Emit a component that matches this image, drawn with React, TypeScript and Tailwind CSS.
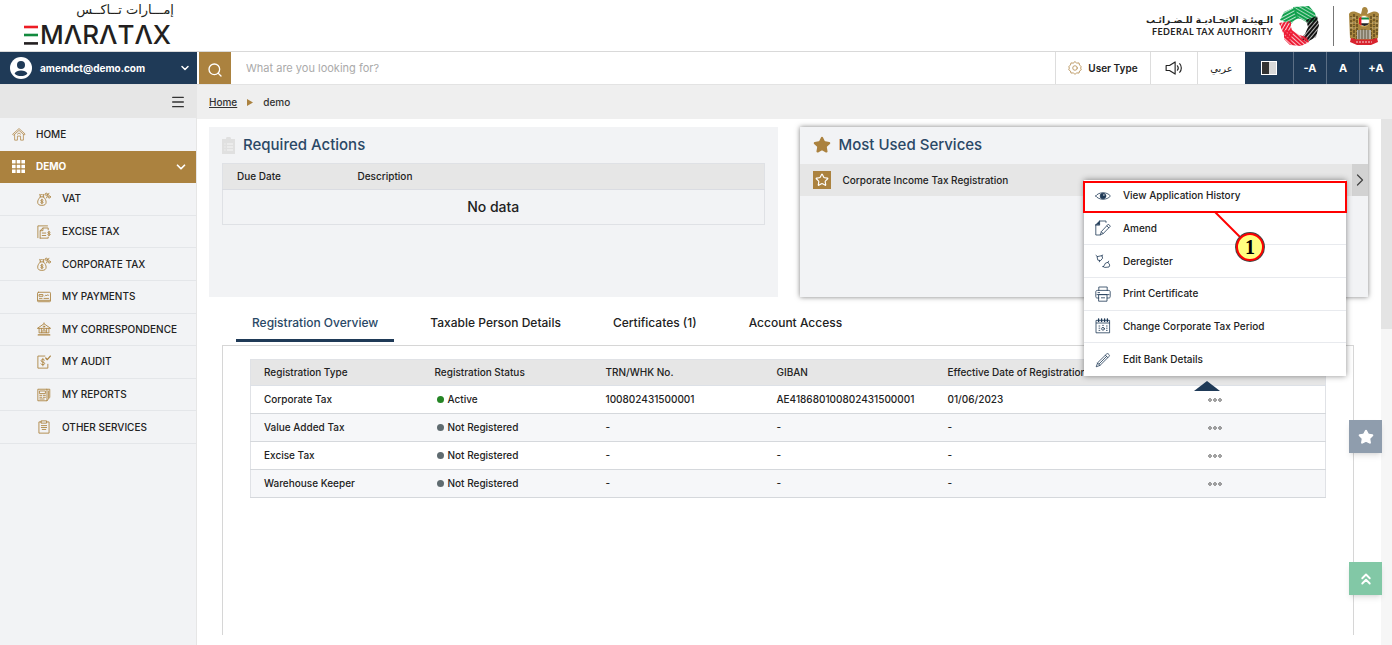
import type { ReactNode } from 'react'
import { ChevronDown, ChevronRight, ChevronsUp, Menu, Search, Star } from 'lucide-react'

type IconProps = { className?: string; strokeWidth?: number; children: ReactNode }

function LineIcon({ className = 'size-4', strokeWidth = 1, children }: IconProps) {
  return (
    <svg
      viewBox="0 0 16 16"
      className={`shrink-0 ${className}`}
      fill="none"
      stroke="currentColor"
      strokeWidth={strokeWidth}
      strokeLinecap="round"
      strokeLinejoin="round"
      aria-hidden="true"
    >
      {children}
    </svg>
  )
}

const homeIcon = (
  <>
    <path d="M1 8 8 1.8 15 8l-1 1.1L8 3.9 2 9.1Z" />
    <path d="M3 8.6V15h3.2v-4.6h3.6V15H13V8.6" />
    <path d="M6.2 8.2 8 6.8l1.8 1.4" />
  </>
)

const bagIcon = (
  <>
    <path d="M3.4 5.6h4.4M4 5.2 3 2.8l1.6.8 1-1 1 1L8 2.8l-.8 2.4" />
    <path d="M3.8 5.8C1.6 7.8.8 9.8.8 11.6c0 2.4 1.4 3.7 4.8 3.7s4.8-1.3 4.8-3.7c0-1.8-.8-3.8-3-5.8" />
    <path d="M7 9.2c-.6-.6-2.6-.6-2.6.6 0 1.4 2.6.6 2.6 2 0 1.2-2.2 1.2-2.8.4M5.6 8.2v5.2" />
    <circle cx="10.6" cy="2.6" r="1.3" />
    <circle cx="14" cy="5.6" r="1.3" />
    <path d="m13.6 1.4-2.8 5.4" />
  </>
)

const exciseIcon = (
  <>
    <path d="M1 14.5V1h11" />
    <path d="M3.6 15V6.4L6.8 3.4h6v2M3.6 15h9.2v-1.2M3.8 6.5h3V3.6" />
    <path d="M6 9.2h4M6 12h4" />
    <path d="M15 8.2c-.6-.7-2.6-.6-2.6.6 0 1.4 2.7.6 2.7 2 0 1.2-2.3 1.2-2.9.4M13.7 7.2v5" />
  </>
)

const paymentIcon = (
  <>
    <rect x=".6" y="2.6" width="14.8" height="10.8" rx="1" />
    <path d="M2.8 5.2h4v2h-4zM9.2 6.8c1-1.6 1.4-1.6 1.6 0 .8-1.4 1.2-1.4 2.4-.8" />
    <path d="M2.8 9.6h3M8 9.6h5.2M1 11.8h14" />
  </>
)

const bankIcon = (
  <>
    <path d="M.8 7 8 2l7.2 5ZM8 1v1" />
    <path d="M2.4 7.4v4.8M5 7.4v4.8M11 7.4v4.8M13.6 7.4v4.8M6.8 12V9h2.4v3M3 12.4h10" />
    <path d="M1.4 14.8h13.2" strokeWidth="1.4" />
    <circle cx="8" cy="5.2" r=".8" />
  </>
)

const auditIcon = (
  <>
    <path d="M9 1.2H1V15h11.4v-4.4" />
    <path d="m10 3.4 1.8 2L15.2 1.2" strokeWidth="1.4" />
    <path d="M8.6 5.8C7.6 4.6 4.6 4.8 4.6 6.6c0 2 4.2 1 4.2 3 0 1.8-3.4 2-4.4.6M6.7 3.8v8.6" />
  </>
)

const reportIcon = (
  <>
    <path d="M1.4 1.4h10v13.2h-10zM11.4 1.4h3.2v9.2l-3.2 4" />
    <path d="M3.2 3.4h6.4v3H3.2zM3.2 8.4h2.2M7.2 8.4h2.4M3.2 10.6h2.2M7.2 10.6h2.4M3.2 12.6h5" />
    <path d="M13 3.4v8" />
  </>
)

const clipboardIcon = (
  <>
    <path d="M5 2.2H2.2V15h11.6V2.2H11" />
    <path d="M5 1h6v2.6H5zM5 6.4h6M5 8.6h6M6 10.8h4" />
  </>
)

const navItems = [
  { label: 'VAT', icon: bagIcon },
  { label: 'EXCISE TAX', icon: exciseIcon },
  { label: 'CORPORATE TAX', icon: bagIcon },
  { label: 'MY PAYMENTS', icon: paymentIcon },
  { label: 'MY CORRESPONDENCE', icon: bankIcon },
  { label: 'MY AUDIT', icon: auditIcon },
  { label: 'MY REPORTS', icon: reportIcon },
  { label: 'OTHER SERVICES', icon: clipboardIcon },
]

const menuItems = [
  {
    label: 'View Application History',
    icon: (
      <>
        <path d="M.6 8C4 3.6 12 3.6 15.4 8 12 12.4 4 12.4.6 8Z" />
        <circle cx="8" cy="8" r="2.8" fill="currentColor" />
        <circle cx="8.9" cy="7" r=".7" fill="#fff" stroke="none" />
      </>
    ),
  },
  {
    label: 'Amend',
    icon: (
      <>
        <path d="M4.4 1H11v1.4M.8 4.6V15h4.4" />
        <path d="M.8 4.8 4.6 1v3.8Z" fill="currentColor" />
        <path d="m6.4 11.8-1.2 3 3-1.2 7.2-7.4-1.8-1.8ZM12 6l1.8 1.8M6.4 11.8l1.8 1.8" />
      </>
    ),
  },
  {
    label: 'Deregister',
    icon: (
      <>
        <path d="m1 2.4 1.4 1.2M2.4 3.6 7 2.6l.6 2.6-2 2.4-2.4-.4ZM6.8 2.8l1-.8M4.8 7.4l-.4 1.4" />
        <path d="m8.6 13.4 2-3.4 2.4-.6 1.8 2.6-.8 2-3.8.4ZM13 9.4l.6-1.2M7.6 13.6h1" />
      </>
    ),
  },
  {
    label: 'Print Certificate',
    icon: (
      <>
        <path d="M3.8 4.4V1h8.4v3.4M3.8 12H2.2C1.2 12 .8 11.4.8 10.6V6c0-1 .5-1.6 1.4-1.6h11.6c.9 0 1.4.6 1.4 1.6v4.6c0 .8-.4 1.4-1.4 1.4h-1.6" />
        <path d="M4 8.6h8v6.6H4zM6.4 11.8h3.2M3 6.6h1.6M2 8.6h12" />
      </>
    ),
  },
  {
    label: 'Change Corporate Tax Period',
    icon: (
      <>
        <path d="M1.4 2.4h13.2v12.4H1.4zM1.4 5h13.2" />
        <path d="M3.6 1v2.4M6.6 1v2.4M9.6 1v2.4M12.4 1v2.4" strokeWidth="1.4" />
        <path d="M4 8h.8M4 10.2h.8M4 12.4h.8M11.4 8h.8M11.4 10.2h.8M11.4 12.4h.8M7.6 7.4h.8" />
        <circle cx="8" cy="10.8" r="1.4" />
      </>
    ),
  },
  {
    label: 'Edit Bank Details',
    icon: (
      <path d="m2.6 11-1.4 3.8L5 13.4l9-9c.6-.6.6-1.2 0-1.8l-.6-.6c-.6-.6-1.2-.6-1.8 0ZM10.4 3.2 12.8 5.6M2.6 11 5 13.4M11.6 4.4 4 12" />
    ),
  },
]

const registrations = [
  {
    type: 'Corporate Tax',
    status: 'Active',
    trn: '100802431500001',
    giban: 'AE418680100802431500001',
    date: '01/06/2023',
  },
  { type: 'Value Added Tax', status: 'Not Registered', trn: '-', giban: '-', date: '-' },
  { type: 'Excise Tax', status: 'Not Registered', trn: '-', giban: '-', date: '-' },
  { type: 'Warehouse Keeper', status: 'Not Registered', trn: '-', giban: '-', date: '-' },
]

const tabs = ['Registration Overview', 'Taxable Person Details', 'Certificates (1)', 'Account Access']

function EmaraTaxLogo() {
  return (
    <a href="#" aria-label="EmaraTax" className="flex w-[150px] flex-col text-[#231f20]">
      <span dir="rtl" className="font-['DejaVu_Sans',sans-serif] text-[13px] leading-[18px]">
        إمـــارات تــاكــس
      </span>
      <span className="flex items-center gap-0.5">
        <svg viewBox="0 0 14 20" className="h-5 w-3.5 shrink-0" aria-hidden="true">
          <path d="M0 2h14" stroke="#ed1c24" strokeWidth="2.6" />
          <path d="M0 10h14" stroke="#128a3e" strokeWidth="2.6" />
          <path d="M0 18.4h14" stroke="#231f20" strokeWidth="2.6" />
        </svg>
        <span className="text-[26px] leading-8 font-medium">MΛRΛTΛX</span>
      </span>
    </a>
  )
}

function AuthorityMark() {
  return (
    <svg viewBox="0 0 40 40" className="size-10 shrink-0" aria-hidden="true">
      <defs>
        <pattern id="weaveGreen" width="3" height="3" patternUnits="userSpaceOnUse" patternTransform="rotate(-28)">
          <rect width="3" height="2.3" fill="#11a04d" />
        </pattern>
        <pattern id="weaveGreenSteep" width="3" height="3" patternUnits="userSpaceOnUse" patternTransform="rotate(30)">
          <rect width="3" height="2.4" fill="#11a04d" />
        </pattern>
        <pattern id="weaveBlack" width="3" height="3" patternUnits="userSpaceOnUse" patternTransform="rotate(-50)">
          <rect width="3" height="2.3" fill="#111" />
        </pattern>
        <pattern id="weaveRed" width="3" height="3" patternUnits="userSpaceOnUse" patternTransform="rotate(42)">
          <rect width="3" height="2.3" fill="#ee1c35" />
        </pattern>
        <pattern id="weaveRedSteep" width="3" height="3" patternUnits="userSpaceOnUse" patternTransform="rotate(-60)">
          <rect width="3" height="2.2" fill="#ee1c35" />
        </pattern>
      </defs>
      <path d="M1 14 5 6 16 1l4 11-4 2-4 4Z" fill="url(#weaveGreen)" />
      <path d="m14 1 16-1 6 7 2 8-9 2-7-4-5-1Z" fill="url(#weaveGreenSteep)" />
      <path d="m38 10 2 9-3 12-9 5-7-3 5-5 3-7-2-7Z" fill="url(#weaveBlack)" />
      <path d="m0 17 12-2v6l2 6-2 8-7-6Z" fill="url(#weaveRedSteep)" />
      <path d="m5 24 8 0 7 5 8 2 2 5-8 4-11-1-6-6Z" fill="url(#weaveRed)" />
    </svg>
  )
}

function Emblem() {
  return (
    <svg viewBox="0 0 32 40" className="h-10 w-8 shrink-0" aria-hidden="true">
      <path
        d="M14 4c0-3 3-4 5-2l1 3-1 3 5-2c4-1 6 0 7 2l-1 24-7 4-7 2-7-2-7-4L1 8c1-2 3-3 7-2l5 2Z"
        fill="#a8863f"
      />
      <path
        d="M3 10v20M6 8v25M9 10v24M23 10v24M26 8v25M29 10v20"
        stroke="#4f3d17"
        strokeWidth="1.2"
        strokeDasharray="3 1"
      />
      <path d="M2 12h6M2 17h6M2 22h6M24 12h6M24 17h6M24 22h6" stroke="#dcc48a" strokeWidth=".8" />
      <circle cx="16" cy="15" r="5.5" fill="#fff" stroke="#cfa347" strokeWidth="1" />
      <path d="M11.8 11.5h8.6a5 5 0 0 1 .8 2H12Z" fill="#108a43" />
      <path d="M12 17.2h9a5 5 0 0 1-9 0Z" fill="#222" />
      <path d="M11 12v6l2.4 1.8V10.4Z" fill="#e31b23" />
      <path d="M9 24h14v9H9z" fill="#b5b0a4" />
      <path d="M11 24v9M14 23v10M17 23v10M20 24v9" stroke="#5d5339" strokeWidth="1" />
      <path d="m3 32 6 1.6h14l6-1.6 1 4-7 3H9l-7-3Z" fill="#d8232e" />
      <path d="M8 36h16" stroke="#fff" strokeWidth=".8" strokeDasharray="2 1" />
    </svg>
  )
}

function Header() {
  return (
    <header className="flex h-[52px] shrink-0 items-center justify-between border-b border-[#d9d9d9] pr-3 pl-6">
      <EmaraTaxLogo />
      <div className="flex items-center">
        <div className="mr-1.5 flex flex-col items-end text-[#222]">
          <span dir="rtl" className="font-['DejaVu_Sans',sans-serif] text-[9px] leading-3 font-bold whitespace-nowrap">
            الـهيئـة الاتحـاديـة للـضـرائـب
          </span>
          <span className="font-['Lato',sans-serif] text-[9px] leading-3 font-bold tracking-wider whitespace-nowrap">
            FEDERAL TAX AUTHORITY
          </span>
        </div>
        <AuthorityMark />
        <span className="mr-3.5 ml-3.5 h-10 w-px bg-[#777]" />
        <Emblem />
      </div>
    </header>
  )
}

function Toolbar() {
  const sizeButton = 'h-full w-[33px] border-l border-[#5c6f85] bg-[#1f3a57] text-[11px] font-bold text-white'
  return (
    <div className="flex h-[33px] shrink-0 border-b border-[#e3e3e3]">
      <button className="flex w-[197px] shrink-0 items-center bg-[#1f3a57] pr-1.5 pl-2.5 text-white">
        <svg viewBox="0 0 22 22" className="size-[22px] shrink-0" aria-hidden="true">
          <circle cx="11" cy="11" r="11" fill="#fff" />
          <circle cx="11" cy="8" r="4" fill="#1f3a57" />
          <path d="M4.6 16.4c1.6-4 11.2-4 12.8 0-2.6 3.6-10.2 3.6-12.8 0Z" fill="#1f3a57" />
        </svg>
        <span className="ml-2 flex-1 text-left text-[10px] font-bold">amendct@demo.com</span>
        <ChevronDown className="size-3" strokeWidth={3} />
      </button>
      <form className="ml-0.5 flex flex-1" role="search">
        <button type="button" aria-label="Search" className="flex w-8 items-center justify-center bg-[#ab823f] pt-1 text-white">
          <Search className="size-4" strokeWidth={2} />
        </button>
        <input
          type="search"
          aria-label="Search"
          placeholder="What are you looking for?"
          className="min-w-0 flex-1 px-[15px] text-[11px] outline-none placeholder:text-[#aaa]"
        />
      </form>
      <div className="flex shrink-0 text-[10px] font-semibold text-[#222]">
        <button className="flex w-[95px] items-center justify-center gap-1.5 border-l border-[#ddd]">
          <LineIcon className="size-3.5 text-[#b8925a]">
            <path d="M8 .8 10 2.4l2.6-.2.6 2.6L15.2 6.4 14.4 8l.8 2-2 1.4-.6 2.4-2.6-.2L8 15.2l-2-1.6-2.6.2-.6-2.4-2-1.4L1.6 8l-.8-1.6 2-1.6.6-2.6 2.6.2Z" />
            <circle cx="8" cy="8" r="2.6" />
          </LineIcon>
          User Type
        </button>
        <button aria-label="Listen" className="flex w-[47px] items-center justify-center border-l border-[#ddd]">
          <LineIcon className="size-[18px]">
            <path d="M1 5.8v4.4h3l5 3.2V2.6L4 5.8ZM11 6c.8 1 .8 3 0 4M13 4.2c2 2 2 5.6 0 7.6" />
          </LineIcon>
        </button>
        <button className="w-12 border-l border-[#ddd] font-['DejaVu_Sans',sans-serif] font-normal">عربي</button>
        <button aria-label="Contrast" className="flex w-12 items-center justify-center bg-[#1f3a57]">
          <span className="flex h-3.5 w-4 border border-white">
            <span className="flex-1 bg-[#333]" />
            <span className="flex-1 bg-[#d8d8d8]" />
          </span>
        </button>
        <button className={sizeButton}>-A</button>
        <button className={sizeButton}>A</button>
        <button className={sizeButton}>+A</button>
      </div>
    </div>
  )
}

function Sidebar() {
  return (
    <aside className="flex w-[197px] shrink-0 flex-col border-r border-[#e6e6e6] bg-[#f2f3f5]">
      <div className="flex h-[33px] items-center justify-end bg-[#e6e6e6] pr-2.5">
        <button aria-label="Toggle menu" className="text-[#333]">
          <Menu className="size-4" strokeWidth={2} />
        </button>
      </div>
      <nav className="grid h-[326px] auto-rows-fr text-[10px] font-medium text-[#222]">
        <a href="#" className="flex items-center pl-3">
          <LineIcon className="size-3.5 text-[#b8925a]">{homeIcon}</LineIcon>
          <span className="ml-2.5">HOME</span>
        </a>
        <a href="#" className="flex items-center bg-[#ab823f] pr-2 pl-3 font-bold text-white">
          <svg viewBox="0 0 13 13" className="size-[13px]" fill="currentColor" aria-hidden="true">
            <path d="M0 0h3.6v3.6H0zM4.7 0h3.6v3.6H4.7zM9.4 0H13v3.6H9.4zM0 4.7h3.6v3.6H0zM4.7 4.7h3.6v3.6H4.7zM9.4 4.7H13v3.6H9.4zM0 9.4h3.6V13H0zM4.7 9.4h3.6V13H4.7zM9.4 9.4H13V13H9.4z" />
          </svg>
          <span className="ml-[11px] flex-1">DEMO</span>
          <ChevronDown className="size-3.5" strokeWidth={3} />
        </a>
        {navItems.map((item) => (
          <a key={item.label} href="#" className="flex items-center border-b border-[#e4e6e9] pl-[37px] whitespace-nowrap">
            <LineIcon className="size-3.5 text-[#ab823f]">{item.icon}</LineIcon>
            <span className="ml-[11px]">{item.label}</span>
          </a>
        ))}
      </nav>
    </aside>
  )
}

function RequiredActions() {
  return (
    <section className="bg-[#f2f3f5] px-[13px]">
      <h2 className="flex h-9 items-center gap-2 text-[15px] font-medium text-[#2a4866]">
        <svg viewBox="0 0 13 17" className="h-[17px] w-[13px]" aria-hidden="true">
          <path d="M0 2h4a2.5 2.5 0 0 1 5 0h4v15H0Z" fill="#e0e0e0" />
          <path d="M2.4 7h1M5 7h6M2.4 10h1M5 10h6M2.4 13h1M5 13h6" stroke="#f6f6f6" />
        </svg>
        Required Actions
      </h2>
      <table className="w-full border border-[#dfe1e5] text-[#222]">
        <thead>
          <tr className="h-[26px] border-b border-[#dadce2] bg-[#e6e6e6] text-left text-[10px]">
            <th className="w-[121px] pl-3.5 font-medium">Due Date</th>
            <th className="pl-3.5 font-medium">Description</th>
          </tr>
        </thead>
        <tbody>
          <tr className="h-[35px]">
            <td colSpan={2} className="text-center text-sm font-medium">
              No data
            </td>
          </tr>
        </tbody>
      </table>
    </section>
  )
}

function ServiceMenu() {
  return (
    <div className="absolute top-4 right-[22px] z-10 w-[262px] bg-white shadow-[0_0_6px_rgba(0,0,0,0.45)]">
      <ul className="grid h-[196px] auto-rows-fr">
        {menuItems.map((item) => (
          <li key={item.label} className="border-b border-[#e8eaee] last:border-b-0">
            <button className="flex h-full w-full items-center gap-3 pl-[11px] text-left text-[10px] font-medium text-[#222]">
              <LineIcon className="size-4 text-[#1f3a57]" strokeWidth={0.8}>
                {item.icon}
              </LineIcon>
              {item.label}
            </button>
          </li>
        ))}
      </ul>
      {/* Step marker */}
      <div className="absolute -inset-x-px top-px h-8 border-2 border-[#f00]" />
      <svg viewBox="0 0 54 54" className="absolute top-[31px] left-[130px] size-[54px]" aria-hidden="true">
        <path d="m1 1 26 26" stroke="#f00" strokeWidth="2" />
        <circle cx="36" cy="36" r="15" fill="#444" />
        <circle cx="36" cy="36" r="13" fill="#ffff80" stroke="#f00" strokeWidth="2" />
      </svg>
      <span className="absolute top-[55px] left-[154px] w-6 text-center font-['Liberation_Serif',serif] text-xl leading-6 font-bold text-black">
        1
      </span>
      <svg viewBox="0 0 26 10" className="absolute top-[201px] left-[110px] h-2.5 w-[26px]" aria-hidden="true">
        <path d="M13 0 26 10H0Z" fill="#1f3a57" />
      </svg>
    </div>
  )
}

function MostUsedServices() {
  return (
    <section className="bg-[#f2f3f5] shadow-[0_0_5px_rgba(0,0,0,0.5)]">
      <h2 className="flex h-9 items-center gap-2 pl-[13px] text-[15px] font-medium text-[#2a4866]">
        <Star className="size-[18px] fill-[#ab823f] text-[#ab823f]" />
        Most Used Services
      </h2>
      <div className="relative mt-px flex h-8 items-center bg-[#e6e6e6] pl-[13px]">
        <button aria-label="Favourite" className="flex size-[18px] items-center justify-center bg-[#ab823f] text-white">
          <Star className="size-3.5" strokeWidth={2} />
        </button>
        <a href="#" className="ml-3 flex-1 text-[10px] font-medium text-[#222]">
          Corporate Income Tax Registration
        </a>
        <button aria-label="Open service" className="flex h-full w-4 items-center justify-center bg-[#d2d2d2] text-[#444]">
          <ChevronRight className="size-5 shrink-0" strokeWidth={1.5} />
        </button>
        <ServiceMenu />
      </div>
    </section>
  )
}

function RegistrationTable() {
  return (
    <table className="w-full table-fixed border border-[#e0e2e6] text-left text-[10px] text-[#222]">
      <thead>
        <tr className="h-[26px] border-b border-[#dde1e7] bg-[#e6e6e6]">
          <th className="w-[171px] pl-[13px] font-medium">Registration Type</th>
          <th className="w-[171px] pl-[13px] font-medium">Registration Status</th>
          <th className="w-[171px] pl-[13px] font-medium">TRN/WHK No.</th>
          <th className="w-[171px] pl-[13px] font-medium">GIBAN</th>
          <th className="w-[171px] pl-[13px] font-medium whitespace-nowrap">Effective Date of Registration</th>
          <th aria-label="Actions" />
        </tr>
      </thead>
      <tbody className="font-medium">
        {registrations.map((row) => (
          <tr key={row.type} className="h-7 border-b border-[#d5d8dc] even:bg-[#f6f7f9]">
            <td className="pl-[13px]">{row.type}</td>
            <td className="pl-[15px]">
              <span className="flex items-center gap-1">
                <span className={`size-[7px] rounded-full ${row.status === 'Active' ? 'bg-[#258525]' : 'bg-[#5f6b70]'}`} />
                {row.status}
              </span>
            </td>
            <td className="pl-[13px]">{row.trn}</td>
            <td className="pl-[13px]">{row.giban}</td>
            <td className="pl-[13px]">{row.date}</td>
            <td className="text-center">
              <button aria-label={`Actions for ${row.type}`} className="flex w-full justify-center text-[#555]">
                <svg viewBox="0 0 14 4" className="h-1 w-3.5" fill="none" stroke="currentColor" strokeWidth="0.9" aria-hidden="true">
                  <circle cx="2" cy="2" r="1.3" />
                  <circle cx="7" cy="2" r="1.3" />
                  <circle cx="12" cy="2" r="1.3" />
                </svg>
              </button>
            </td>
          </tr>
        ))}
      </tbody>
    </table>
  )
}

export default function App() {
  return (
    <div className="flex h-screen min-h-[480px] flex-col overflow-hidden bg-white font-['Inter',sans-serif]">
      <Header />
      <Toolbar />
      <div className="flex min-h-0 flex-1">
        <Sidebar />
        <div className="flex min-w-0 flex-1 flex-col">
          <nav aria-label="Breadcrumb" className="flex h-[34px] shrink-0 items-center bg-[#efefef] pl-3 text-[10px] font-medium text-[#333]">
            <a href="#" className="underline">
              Home
            </a>
            <svg viewBox="0 0 6 7" className="mx-2.5 h-[7px] w-1.5" aria-hidden="true">
              <path d="M0 0 6 3.5 0 7Z" fill="#ab823f" />
            </svg>
            <span>demo</span>
          </nav>
          <div className="flex min-h-0 flex-1">
            <main className="flex min-w-0 flex-1 flex-col pt-2 pr-[13px] pb-2.5 pl-3">
              <div className="grid h-[170px] shrink-0 grid-cols-2 gap-[22px]">
                <RequiredActions />
                <MostUsedServices />
              </div>
              <div className="mt-2.5 ml-[27px] flex h-[35px] shrink-0 gap-5" role="tablist">
                {tabs.map((tab, i) => (
                  <button
                    key={tab}
                    role="tab"
                    aria-selected={i === 0}
                    className={`border-b-3 px-4 text-xs font-medium ${
                      i === 0 ? 'border-[#1f3a57] text-[#2a4866]' : 'border-transparent text-[#222]'
                    }`}
                  >
                    {tab}
                  </button>
                ))}
              </div>
              <div className="mt-[3px] mr-3.5 ml-[13px] flex-1 border border-b-0 border-[#d6d6d6] px-[27px] pt-[13px]">
                <RegistrationTable />
              </div>
            </main>
            <div className="w-[11px] shrink-0 bg-[#f6f6f6]">
              <div className="h-[210px] bg-[#e4e4e4]" />
            </div>
          </div>
        </div>
      </div>
      <div className="fixed right-2.5 bottom-[50px] flex flex-col gap-[109px]">
        <button aria-label="Favourites" className="flex size-[33px] items-center justify-center bg-[#8f9dad] text-white shadow-md">
          <Star className="size-4 fill-white" />
        </button>
        <button aria-label="Back to top" className="flex size-[33px] items-center justify-center bg-[#82c8a6] text-white shadow-md">
          <ChevronsUp className="size-[18px]" strokeWidth={2.5} />
        </button>
      </div>
    </div>
  )
}
